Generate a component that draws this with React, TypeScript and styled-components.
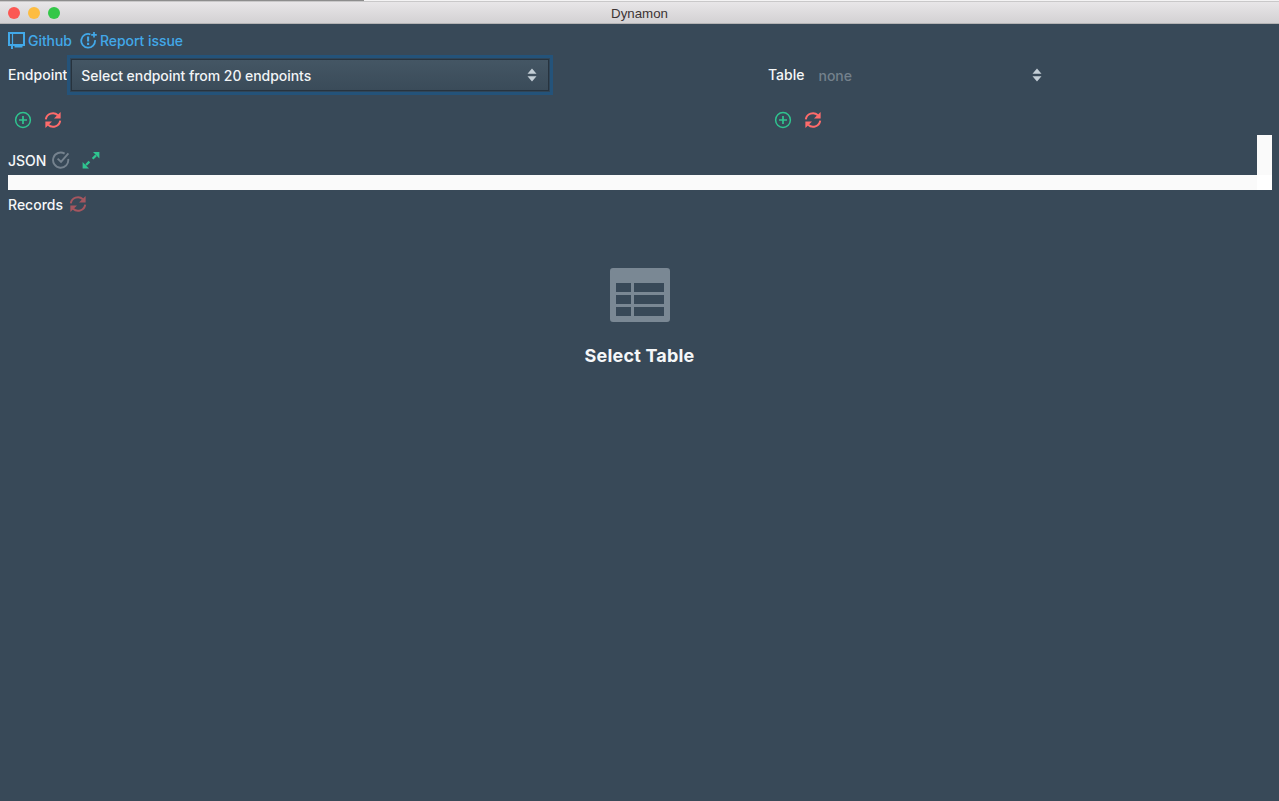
import styled, { createGlobalStyle } from "styled-components";

const GlobalStyle = createGlobalStyle`
  html, body {
    margin: 0;
    height: 100%;
    background: #384958;
    font-family: Inter, "Noto Sans", "Liberation Sans", sans-serif;
  }
  #root {
    height: 100%;
  }
`;

const Page = styled.div`
  height: 801px;
  display: flex;
  flex-direction: column;
  overflow: hidden;
`;

const TitleBar = styled.header`
  height: 24px;
  box-sizing: border-box;
  display: flex;
  align-items: center;
  justify-content: center;
  position: relative;
  background: linear-gradient(#e9e7e9, #d3d1d3);
  border-top: 1px solid #f4f3f4;
  border-bottom: 1px solid #b4b3b4;
  box-shadow: inset 0 1px 0 #c9c8c9;

  &::before {
    content: "";
    position: absolute;
    left: 0;
    top: -1px;
    width: 364px;
    height: 1px;
    background: #8d8d8d;
  }
`;

const Lights = styled.div`
  position: absolute;
  left: 8px;
  top: 6px;
  display: flex;
  gap: 8px;
`;

const Light = styled.span<{ $color: string }>`
  width: 12px;
  height: 12px;
  border-radius: 50%;
  background: ${({ $color }) => $color};
`;

const WindowTitle = styled.span`
  font-family: "Liberation Sans", sans-serif;
  font-size: 13.3px;
  color: #3c3434;
  padding-top: 2px;
`;

const Content = styled.main`
  flex: 1;
  display: flex;
  flex-direction: column;
  padding: 6px 7px 0 8px;
`;

const Links = styled.nav`
  display: flex;
  gap: 8px;
  height: 21px;
  align-items: center;
`;

const LinkItem = styled.a`
  display: flex;
  align-items: center;
  gap: 3px;
  font-size: 14px;
  font-weight: 500;
  letter-spacing: -0.05px;
  color: #42a8e8;
`;

const Selectors = styled.div`
  display: grid;
  grid-template-columns: 760px 1fr;
  margin-top: 4px;
  height: 40px;
`;

const Field = styled.div`
  display: flex;
  align-items: center;
`;

const Label = styled.label<{ $gap: number }>`
  font-size: 14px;
  font-weight: 500;
  color: #f5f7f8;
  padding-bottom: 2px;
  margin-right: ${({ $gap }) => $gap}px;
`;

const FocusRing = styled.div`
  margin-left: -4px;
  padding: 1px;
  border: 3px solid #24537a;
  background: #2f4558;
`;

const EndpointSelect = styled.div`
  width: 478px;
  height: 32px;
  box-sizing: border-box;
  display: flex;
  align-items: center;
  justify-content: space-between;
  padding: 0 11px 0 9px;
  background: linear-gradient(#445664, #3a4b59);
  border: 1px solid #27333e;
  font-size: 14px;
  font-weight: 500;
  letter-spacing: -0.05px;
  color: #f1f4f6;
`;

const TableSelect = styled.div`
  width: 228px;
  height: 32px;
  box-sizing: border-box;
  display: flex;
  align-items: center;
  justify-content: space-between;
  padding: 0 4px 0 0;
  font-size: 14px;
  font-weight: 500;
  color: #74818c;
`;

const Actions = styled.div`
  display: grid;
  grid-template-columns: 760px 1fr;
  margin-top: 12px;
  height: 26px;
  align-items: center;
`;

const ActionGroup = styled.div`
  display: flex;
  align-items: center;
  gap: 12px;
  padding-left: 6px;
`;

const JsonPanel = styled.section`
  display: grid;
  grid-template-columns: 1fr 15px;
  grid-template-rows: 40px 15px;
  margin-top: 2px;
`;

const Scrollbar = styled.div<{ $axis: "x" | "y" | "corner" }>`
  background: ${({ $axis }) => ($axis === "corner" ? "#ffffff" : "#fafafa")};
  grid-column: ${({ $axis }) => ($axis === "x" ? 1 : 2)};
  grid-row: ${({ $axis }) => ($axis === "y" ? 1 : 2)};
`;

const HeadTitle = styled.div`
  display: flex;
  align-items: center;
  height: 40px;
  padding-top: 10px;
  box-sizing: border-box;
  font-size: 14px;
  font-weight: 500;
  color: #f5f7f8;
`;

const Icons = styled.span`
  display: flex;
  align-items: center;
  gap: 12px;
  margin-left: 6px;
`;

const Records = styled.div`
  display: flex;
  align-items: center;
  gap: 6px;
  height: 28px;
  font-size: 14px;
  font-weight: 500;
  color: #f5f7f8;
`;

const Empty = styled.div`
  display: flex;
  flex-direction: column;
  align-items: center;
  margin-top: 50px;
  margin-left: -1px;
`;

const EmptyTitle = styled.h2`
  margin: 22px 0 0;
  font-size: 18px;
  line-height: 24px;
  font-weight: 700;
  letter-spacing: 0.2px;
  color: #f5f7f8;
`;

const GithubIcon = () => (
  <svg width="17" height="17" viewBox="0 0 17 17" fill="none">
    <path d="M1 1h15v12H1z" stroke="#42a8e8" strokeWidth="2" />
    <path d="M4.5 1v12" stroke="#42a8e8" strokeWidth="1.2" />
    <path d="M3 14h2v3H3zM6.5 14h8v1.4h-8z" fill="#42a8e8" />
  </svg>
);

const ReportIcon = () => (
  <svg width="17" height="17" viewBox="0 0 17 17" fill="none">
    <path d="M10.4 2.3A6.9 6.9 0 1 0 15 8.2" stroke="#42a8e8" strokeWidth="1.8" />
    <path d="M8.1 4.6v5M8.1 10.8v2.2" stroke="#42a8e8" strokeWidth="2.1" />
    <path d="M14 0v5.6M11.2 2.8h5.6" stroke="#42a8e8" strokeWidth="1.7" />
  </svg>
);

const Carets = () => (
  <svg width="10" height="14" viewBox="0 0 10 14">
    <path d="M5 0.5L9.5 5.8H0.5zM5 13.5L0.5 8.2H9.5z" fill="#c3ced6" />
  </svg>
);

const AddIcon = () => (
  <svg width="18" height="18" viewBox="0 0 18 18" fill="none" stroke="#2fc48f">
    <circle cx="9" cy="9" r="7.4" strokeWidth="1.5" />
    <path d="M9 5v8M5 9h8" strokeWidth="1.7" />
  </svg>
);

const RefreshIcon = ({ color }: { color: string }) => (
  <svg width="18" height="18" viewBox="0 0 18 18" fill="none">
    <path d="M1.8 8.4A7.2 7.2 0 0 1 13.9 4.2" stroke={color} strokeWidth="2" />
    <path d="M16.6 1v6.6H10z" fill={color} />
    <path d="M16.2 9.6A7.2 7.2 0 0 1 4.1 13.8" stroke={color} strokeWidth="2" />
    <path d="M1.4 17v-6.6H8z" fill={color} />
  </svg>
);

const CheckIcon = () => (
  <svg width="18" height="18" viewBox="0 0 18 18" fill="none" stroke="#75828e" strokeWidth="1.9">
    <path d="M12.6 2.6A7.6 7.6 0 1 0 16.2 8" />
    <path d="M5.6 7.6L9 10.8L16.4 2.4" />
  </svg>
);

const ExpandIcon = () => (
  <svg width="18" height="18" viewBox="0 0 18 18" fill="none">
    <path d="M11 1h6.4v6.4z" fill="#2fc48f" />
    <path d="M14 4.4L10.6 7.8" stroke="#2fc48f" strokeWidth="2.2" />
    <path d="M7 17.4H.6V11z" fill="#2fc48f" />
    <path d="M4 14l3.4-3.4" stroke="#2fc48f" strokeWidth="2.2" />
  </svg>
);

const TableIcon = () => (
  <svg width="60" height="54" viewBox="0 0 60 54">
    <path
      fillRule="evenodd"
      fill="#7a8894"
      d="M3 0h54a3 3 0 0 1 3 3v48a3 3 0 0 1-3 3H3a3 3 0 0 1-3-3V3a3 3 0 0 1 3-3zM6 15v9h15v-9zM24 15v9h30v-9zM6 27v9h15v-9zM24 27v9h30v-9zM6 39v9h15v-9zM24 39v9h30v-9z"
    />
  </svg>
);

const App = () => {
  return (
    <>
      <GlobalStyle />
      <Page>
        <TitleBar>
          <Lights>
            <Light $color="#fc5753" />
            <Light $color="#fdbc40" />
            <Light $color="#33c748" />
          </Lights>
          <WindowTitle>Dynamon</WindowTitle>
        </TitleBar>
        <Content>
          <Links>
            <LinkItem>
              <GithubIcon />
              Github
            </LinkItem>
            <LinkItem>
              <ReportIcon />
              Report issue
            </LinkItem>
          </Links>
          <Selectors>
            <Field>
              <Label $gap={4}>Endpoint</Label>
              <FocusRing>
                <EndpointSelect>
                  Select endpoint from 20 endpoints
                  <Carets />
                </EndpointSelect>
              </FocusRing>
            </Field>
            <Field>
              <Label $gap={14}>Table</Label>
              <TableSelect>
                none
                <Carets />
              </TableSelect>
            </Field>
          </Selectors>
          <Actions>
            <ActionGroup>
              <AddIcon />
              <RefreshIcon color="#ff6b6b" />
            </ActionGroup>
            <ActionGroup>
              <AddIcon />
              <RefreshIcon color="#ff6b6b" />
            </ActionGroup>
          </Actions>
          <JsonPanel>
            <HeadTitle>
              JSON
              <Icons>
                <CheckIcon />
                <ExpandIcon />
              </Icons>
            </HeadTitle>
            <Scrollbar $axis="y" />
            <Scrollbar $axis="x" />
            <Scrollbar $axis="corner" />
          </JsonPanel>
          <Records>
            Records
            <RefreshIcon color="#a5565f" />
          </Records>
          <Empty>
            <TableIcon />
            <EmptyTitle>Select Table</EmptyTitle>
          </Empty>
        </Content>
      </Page>
    </>
  );
};

export default App;
